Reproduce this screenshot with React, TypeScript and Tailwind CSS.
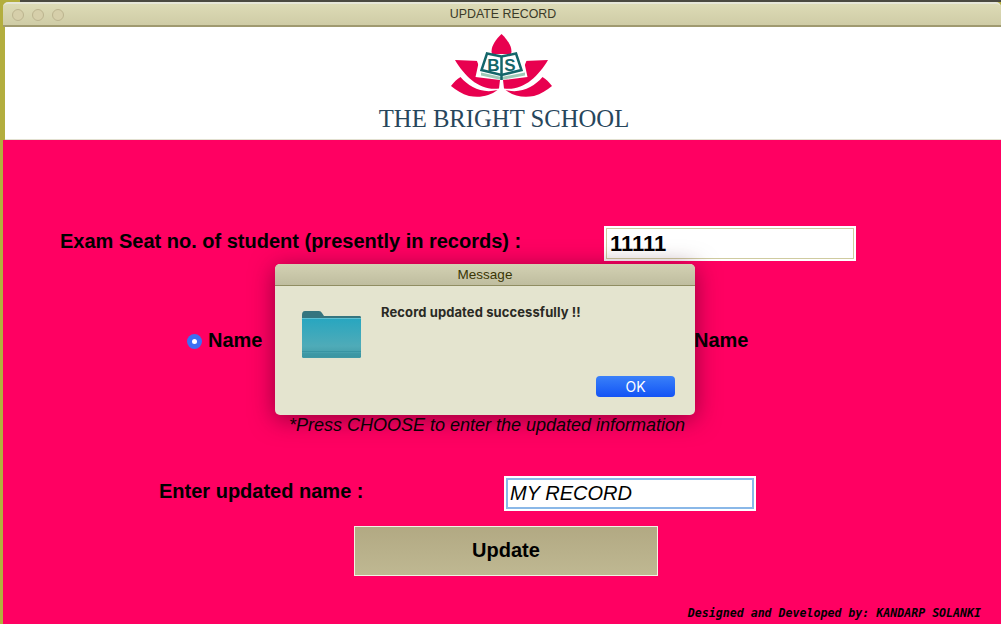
import React from "react";

function Logo() {
  const side = (
    <>
      <path d="M87 35 L111 36 L107.500 52 L132 55 L131 63.500 C112 66 97 52 87 35 Z" fill="#e8004f" />
      <path d="M83 61 C86 57 89 54 92.500 52 C101 62 114 69 129.500 65 C122 71 112 73 101 71 C94 69 88 65 83 61 Z" fill="#e8004f" />
    </>
  );
  return (
    <svg width="270" height="66" viewBox="0 9 270 66" className="block" aria-hidden="true">
      <path d="M133.500 9 C127 15 122 23 124 29 L143 29 C145 23 140 15 133.500 9 Z" fill="#e8004f" />
      {side}
      <g transform="translate(267 0) scale(-1 1)">{side}</g>
      <path d="M107.500 32 L113 47 L133.500 52 L154 47 L160 32 L146 28.500 L133.500 31 L121 28.500 Z" fill="#fff" />
      <path d="M119 28.500 L133.500 31.500 L148 28.500 L153.500 45 L133.500 50 L113.500 45 Z" fill="#fff" stroke="#14666a" strokeWidth="2.500" />
      <path d="M113 47.500 L133.500 52 L157 47.500 L157 50.500 L133.500 55 L113 50.500 Z" fill="#9fc9b8" />
      <path d="M133.500 31 L133.500 55" stroke="#14666a" strokeWidth="2.500" />
      <text x="125.500" y="46" textAnchor="middle" fontFamily="Liberation Sans, sans-serif" fontWeight="700" fontSize="17" fill="#14666a">B</text>
      <text x="142" y="45.500" textAnchor="middle" fontFamily="Liberation Sans, sans-serif" fontWeight="700" fontSize="17" fill="#14666a">S</text>
    </svg>
  );
}

function Folder() {
  return (
    <svg width="62" height="50" viewBox="0 0 62 50" aria-hidden="true" className="block">
      <defs>
        <linearGradient id="front" x1="0" y1="0" x2="0" y2="1">
          <stop offset="0" stopColor="#27a6c0" />
          <stop offset="0.7" stopColor="#4fabb8" />
          <stop offset="1" stopColor="#3f98a4" />
        </linearGradient>
      </defs>
      <path d="M1 5 Q1 1 4 1 L18 1 Q20 1 21 3 L23 6 L59 6 Q60 6 60 8 L60 12 L1 12 Z" fill="#35757f" />
      <rect x="1" y="8" width="59" height="40" rx="1.500" fill="url(#front)" />
      <rect x="1" y="8" width="59" height="1" fill="#5cc0d2" />
      <path d="M1 41.500 H60 M1 44 H60 M1 46 H60" stroke="#35909f" strokeWidth="0.800" />
    </svg>
  );
}

export default function App() {
  return (
    <div className="relative w-[1001px] h-[624px] overflow-hidden bg-[#b3ae3e] [font-family:'Liberation_Sans',sans-serif]">
      <div className="h-[2px] ml-[20px] bg-[#4a4940]" />
      <div className="ml-[3px] h-[622px] flex flex-col">
        <div className="relative h-[25px] shrink-0 flex items-center justify-center rounded-t-[5px] border-t-2 border-[#e6e6d8] border-b-2 border-b-[#a09a70] bg-gradient-to-b from-[#dddbb6] to-[#cfcca6]">
          <div className="absolute left-[9px] top-[5px] flex gap-2">
            <span className="w-3 h-3 rounded-full bg-[#d6cfaa] border border-[#bcb48f]" />
            <span className="w-3 h-3 rounded-full bg-[#d6cfaa] border border-[#bcb48f]" />
            <span className="w-3 h-3 rounded-full bg-[#d6cfaa] border border-[#bcb48f]" />
          </div>
          <span className="text-[12.400px] text-[#3b3a28] ml-[2px]">UPDATE RECORD</span>
        </div>
        <div className="h-[113px] shrink-0 bg-white flex flex-col items-center ml-[2px] border-b border-[#e2e0d0]">
          <div className="pt-[7px] -ml-[1px]"><Logo /></div>
          <div className="[font-family:'Liberation_Serif',serif] text-[24.700px] leading-[28px] text-[#27465c] whitespace-nowrap mt-[5px] ml-[2px]">THE BRIGHT SCHOOL</div>
        </div>
        <div className="flex-1 bg-[#ff0062] text-black flex flex-col">
          <div className="flex items-center pl-[57px] pt-[86px]">
            <span className="w-[544px] text-[20px] leading-[24px] font-bold whitespace-nowrap -mt-[5px]">Exam Seat no. of student (presently in records) :</span>
            <input readOnly value="11111" className="w-[252px] h-[35px] px-[3px] bg-white border-[3px] border-white outline outline-1 -outline-offset-3 outline-[#cfcba0] text-[22px] font-bold text-black" />
          </div>
          <div className="flex items-center pl-[184px] mt-[68px] h-[24px]">
            <span className="w-[15px] h-[15px] rounded-full bg-[#3b6ff2] flex items-center justify-center">
              <span className="w-[5px] h-[5px] rounded-full bg-white" />
            </span>
            <span className="ml-[6px] w-[486px] text-[20px] font-bold -mt-[3px]">Name</span>
            <span className="text-[20px] font-bold -mt-[3px]">Name</span>
          </div>
          <div className="mt-[60px] h-[24px] flex items-center justify-center pr-[30px] text-[18px] italic">*Press CHOOSE to enter the updated information</div>
          <div className="flex items-center pl-[156px] mt-[39px]">
            <span className="w-[345px] text-[20px] leading-[24px] font-bold -mt-[5px]">Enter updated name :</span>
            <input readOnly value="MY RECORD" className="w-[252px] h-[35px] px-[4px] bg-white border-2 border-white outline-2 -outline-offset-4 outline-[#8ab8e8] text-[20px] italic text-black" />
          </div>
          <button className="ml-[351px] mt-[15px] w-[304px] h-[50px] border border-[#f4f2e4] bg-gradient-to-b from-[#b2a983] to-[#bfb892] text-[20px] font-bold text-black pb-[2px]">Update</button>
          <div className="mt-[30px] pr-[20px] text-right text-[11.600px] leading-[14px] italic font-bold [font-family:'DejaVu_Sans_Mono',monospace] whitespace-nowrap">Designed and Developed by: KANDARP SOLANKI</div>
        </div>
      </div>

      <div className="absolute left-[275px] top-[264px] w-[420px] h-[151px] rounded-[5px] bg-[#e4e4cf] shadow-[0_4px_24px_rgba(60,0,30,0.55)] overflow-hidden flex flex-col">
        <div className="h-[22px] shrink-0 flex items-center justify-center border-b border-[#908d62] bg-gradient-to-b from-[#d3d1b3] to-[#bfbd9f] text-[13.500px] text-[#3a3605] pt-[2px]">Message</div>
        <div className="relative flex-1 flex pl-[26px] pt-[24px]">
          <Folder />
          <div className="ml-[18px] -mt-[6px] text-[13px] leading-[16px] font-bold text-[#2a2a24] [font-family:Inter,sans-serif] tracking-[0.1px]">Record updated successfully !!</div>
          <button className="absolute right-[20px] bottom-[18px] w-[79px] h-[21px] rounded-[4px] bg-gradient-to-b from-[#3a80f9] to-[#1452f5] text-white text-[14px] [font-family:Inter,sans-serif]">OK</button>
        </div>
      </div>
    </div>
  );
}
